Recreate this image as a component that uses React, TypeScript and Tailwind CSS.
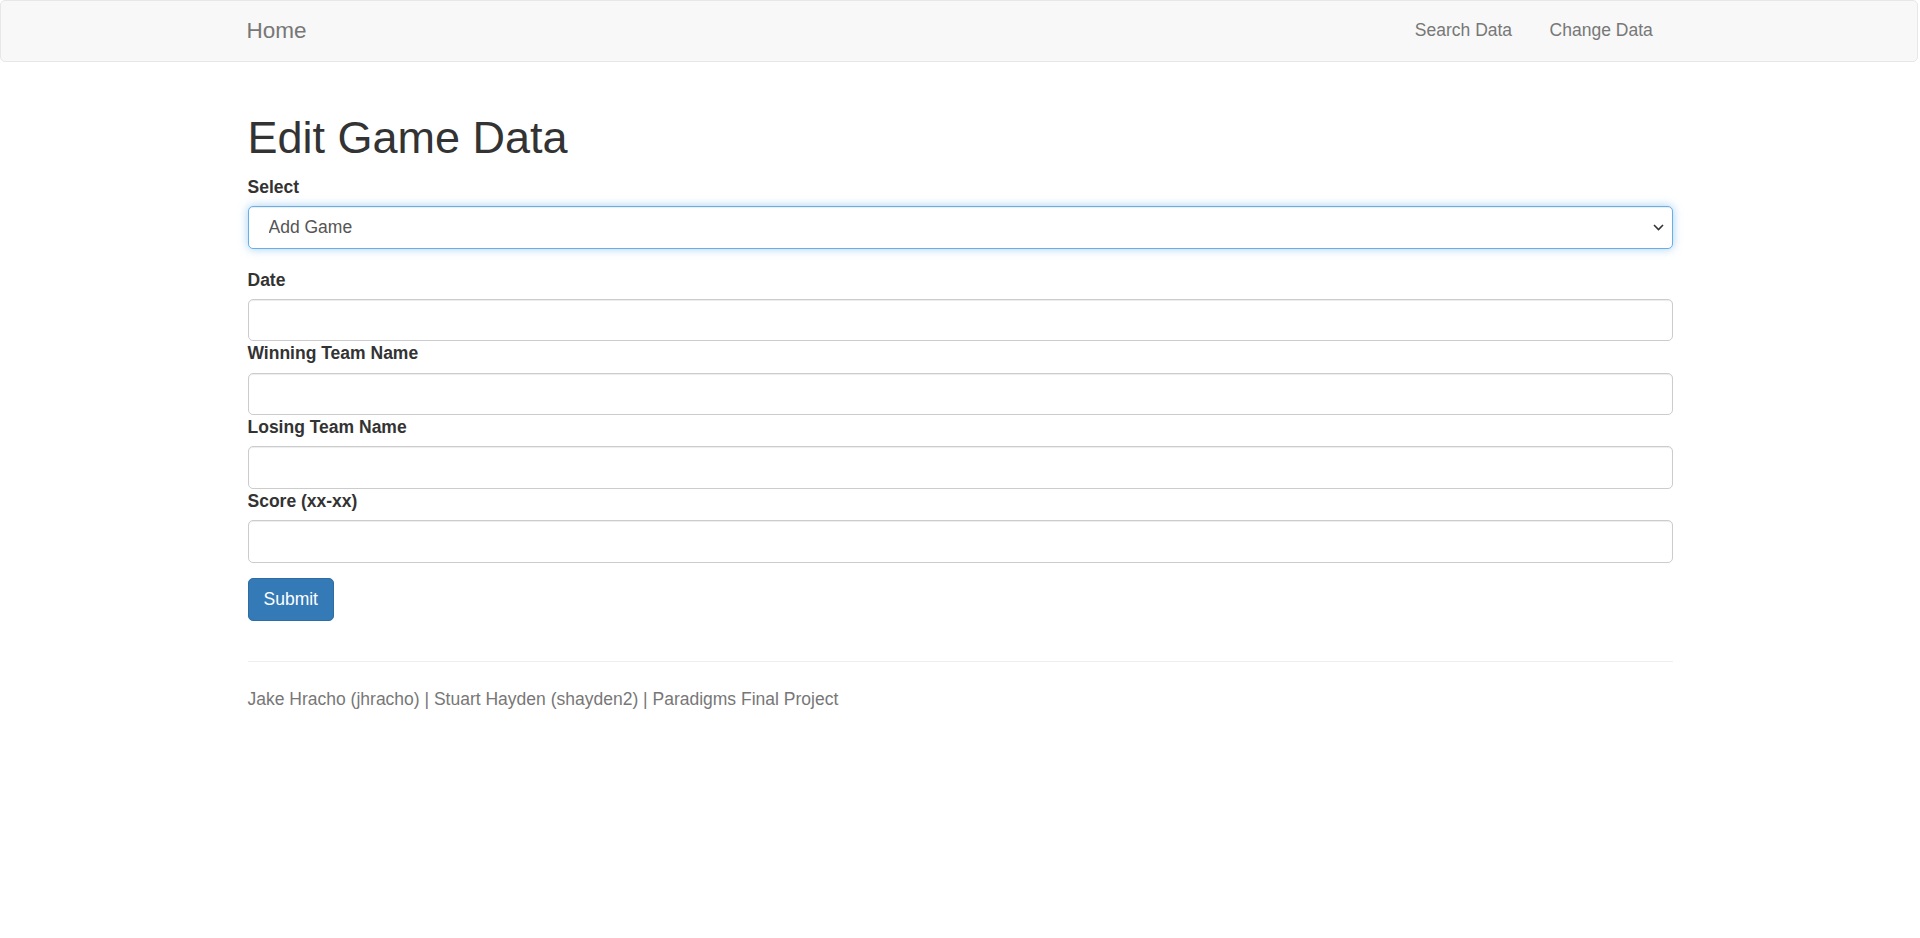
export default function App() {
  const fields = ["Winning Team Name", "Losing Team Name", "Score (xx-xx)"];

  return (
    <div className="min-h-screen bg-white font-['Liberation_Sans',Arial,sans-serif] text-[17.5px] leading-[25px] text-[#333]">
      {/* Navbar */}
      <nav className="h-[62px] mr-[2px] bg-[#f8f8f8] border border-[#e7e7e7] rounded-[5px]">
        <div className="mx-auto w-[1425px] h-full flex items-center justify-between pb-[1px]">
          <a className="text-[22.5px] leading-[25px] text-[#777]">Home</a>
          <ul className="flex">
            <li>
              <a className="px-[18.75px] text-[#777]">Search Data</a>
            </li>
            <li>
              <a className="pl-[18.75px] pr-[18.75px] text-[#777]">Change Data</a>
            </li>
          </ul>
        </div>
      </nav>

      <div className="mx-auto w-[1425px] pt-[26px]">
        <h1 className="mt-[25px] mb-[12.5px] text-[45px] leading-[49.5px] font-normal text-[#333]">
          Edit Game Data
        </h1>

        <form>
          <div className="mb-[18.75px]">
            <label className="block mb-[6.25px] font-bold">Select</label>
            <div className="relative">
              <select
                defaultValue="add"
                className="appearance-none block w-full h-[42.5px] pl-[20px] pr-[40px] text-[#555] bg-white border border-[#66afe9] rounded-[5px] outline-none shadow-[inset_0_1px_1px_rgba(0,0,0,0.075),0_0_10px_rgba(102,175,233,0.6)]"
              >
                <option value="add">Add Game</option>
                <option value="edit">Edit Game</option>
                <option value="delete">Delete Game</option>
              </select>
              <svg
                className="absolute right-[9px] top-[18px] pointer-events-none"
                width="11"
                height="7"
                viewBox="0 0 11 7"
                fill="none"
              >
                <path d="M1 1l4.5 4.5L10 1" stroke="#333" strokeWidth="1.6" />
              </svg>
            </div>
          </div>

          <label className="block mb-[6.25px] font-bold">Date</label>
          <input className="block w-full h-[42.5px] px-[15px] bg-white border border-[#ccc] rounded-[5px] outline-none shadow-[inset_0_1px_1px_rgba(0,0,0,0.075)]" />

          {fields.map((f) => (
            <div key={f}>
              <label className="block mb-[6.25px] font-bold">{f}</label>
              <input className="block w-full h-[42.5px] px-[15px] bg-white border border-[#ccc] rounded-[5px] outline-none shadow-[inset_0_1px_1px_rgba(0,0,0,0.075)]" />
            </div>
          ))}

          <button
            type="button"
            className="mt-[15px] h-[43px] px-[15px] text-white bg-[#337ab7] border border-[#2e6da4] rounded-[5px]"
          >
            Submit
          </button>
        </form>

        <hr className="mt-[40px] mb-[25px] border-0 border-t-[1.25px] border-[#eee]" />
        <footer className="text-[#777]">
          Jake Hracho (jhracho) | Stuart Hayden (shayden2) | Paradigms Final Project
        </footer>
      </div>
    </div>
  );
}
